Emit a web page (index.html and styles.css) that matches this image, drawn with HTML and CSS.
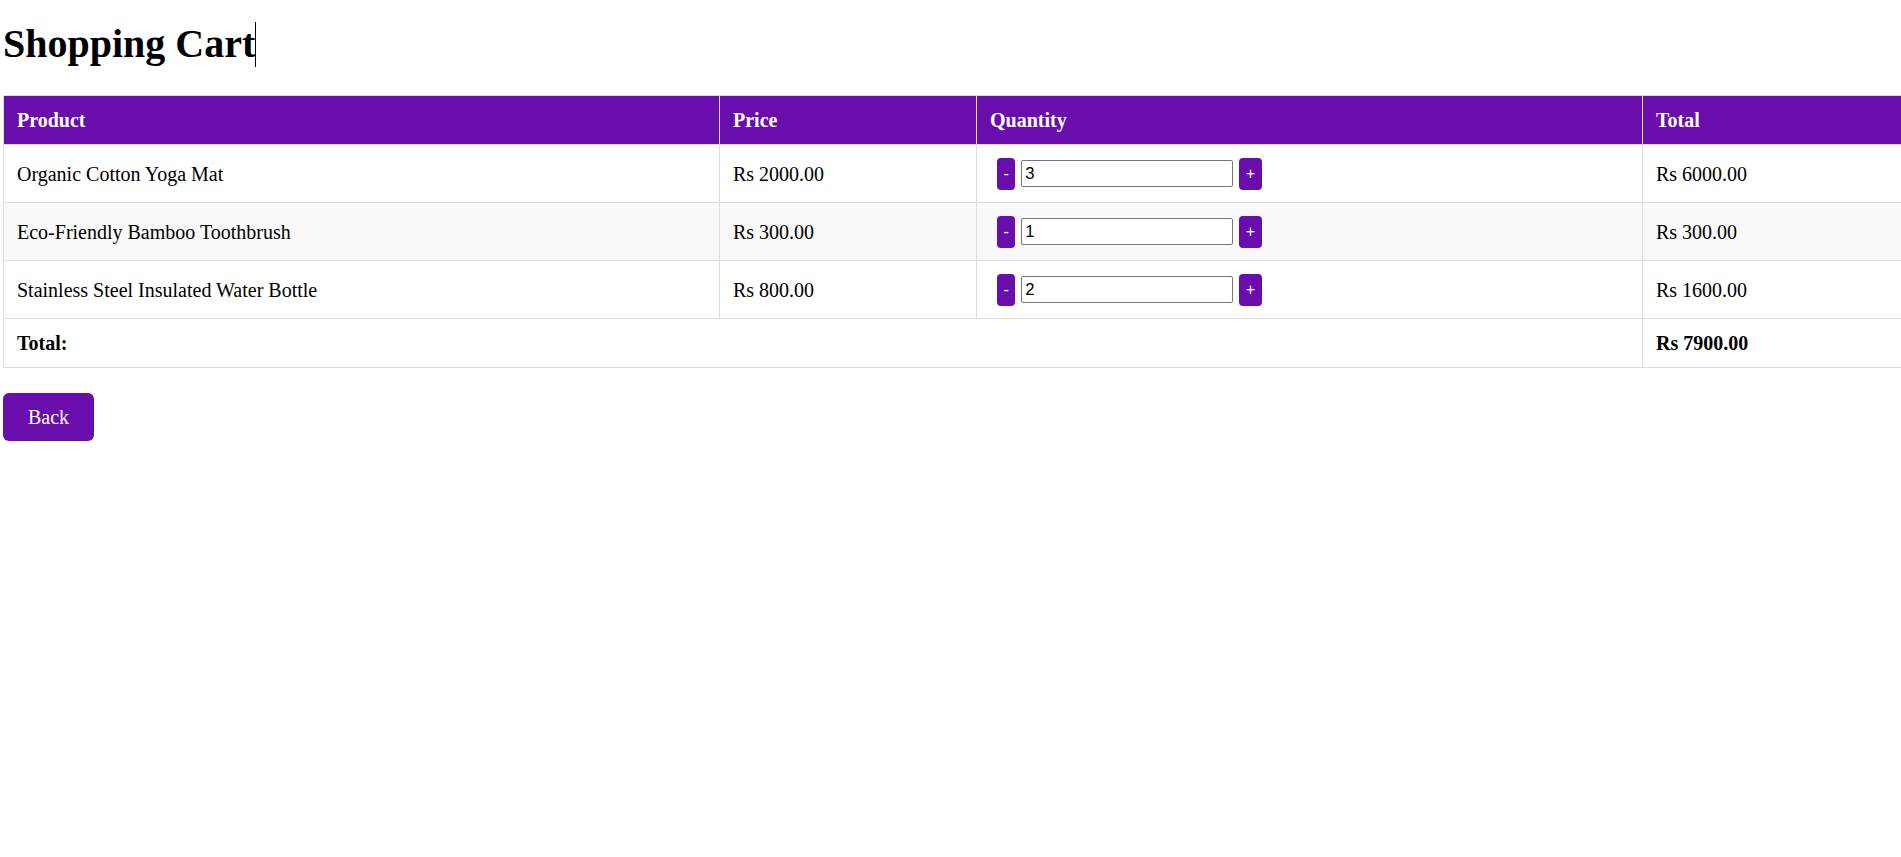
FILE: index.html
```html
<!DOCTYPE html>
<html lang="en">
<head>
<meta charset="utf-8">
<title>Shopping Cart</title>
<link rel="stylesheet" href="styles.css">
</head>
<body>
<h1 class="title">Shopping Cart<span class="caret"></span></h1>
<table class="cart">
  <colgroup>
    <col class="c-product">
    <col class="c-price">
    <col class="c-qty">
    <col class="c-total">
  </colgroup>
  <thead>
    <tr>
      <th>Product</th>
      <th>Price</th>
      <th>Quantity</th>
      <th>Total</th>
    </tr>
  </thead>
  <tbody>
    <tr>
      <td>Organic Cotton Yoga Mat</td>
      <td>Rs 2000.00</td>
      <td><div class="qty"><button class="qbtn">-</button><input class="qinput" type="text" value="3"><button class="qbtn">+</button></div></td>
      <td>Rs 6000.00</td>
    </tr>
    <tr class="alt">
      <td>Eco-Friendly Bamboo Toothbrush</td>
      <td>Rs 300.00</td>
      <td><div class="qty"><button class="qbtn">-</button><input class="qinput" type="text" value="1"><button class="qbtn">+</button></div></td>
      <td>Rs 300.00</td>
    </tr>
    <tr>
      <td>Stainless Steel Insulated Water Bottle</td>
      <td>Rs 800.00</td>
      <td><div class="qty"><button class="qbtn">-</button><input class="qinput" type="text" value="2"><button class="qbtn">+</button></div></td>
      <td>Rs 1600.00</td>
    </tr>
    <tr class="sum">
      <td colspan="3">Total:</td>
      <td>Rs 7900.00</td>
    </tr>
  </tbody>
</table>
<button class="back">Back</button>
</body>
</html>
```

FILE: styles.css
```css
html, body {
  margin: 0;
  padding: 0;
  background: #fff;
  overflow: hidden;
}
body {
  padding: 0 3px;
  font-family: "Liberation Serif", "Times New Roman", serif;
  color: #000;
}
.title {
  margin: 21px 0 28px;
  font-size: 40px;
  line-height: 46px;
  font-weight: bold;
  white-space: nowrap;
}
.caret {
  display: inline-block;
  width: 1px;
  height: 45px;
  background: #000;
  vertical-align: top;
  margin-top: 1px;
}
.cart {
  border-collapse: collapse;
  table-layout: fixed;
  width: 2040px;
  font-size: 20px;
  line-height: 24px;
}
.c-product { width: 716px; }
.c-price { width: 257px; }
.c-qty { width: 666px; }
.c-total { width: 401px; }
.cart th,
.cart td {
  border: 1px solid #ddd;
  padding: 12px 12px 12px 13px;
  text-align: left;
  vertical-align: middle;
}
.cart th {
  background: #6a0dad;
  color: #fff;
  font-weight: bold;
}
.cart tr.alt td {
  background: #f9f9f9;
}
.cart tr.sum td {
  font-weight: bold;
}
.qty {
  display: flex;
  align-items: center;
  height: 33px;
  padding-left: 1px;
}
.qbtn {
  margin: 0 6px;
  padding: 8px 6.5px;
  height: 32px;
  border: none;
  border-radius: 4px;
  background: #6a0dad;
  color: #fff;
  font-family: "Liberation Sans", Arial, sans-serif;
  font-size: 16px;
  line-height: 16px;
}
.qinput {
  box-sizing: border-box;
  width: 212px;
  height: 27px;
  margin: 0;
  padding: 1px 3px;
  border: 1px solid #767676;
  border-radius: 2px;
  font-family: "Liberation Sans", Arial, sans-serif;
  font-size: 16.67px;
  color: #000;
}
.back {
  margin-top: 25px;
  padding: 12px 25px;
  border: none;
  border-radius: 6px;
  background: #6a0dad;
  color: #fff;
  font-family: "Liberation Serif", "Times New Roman", serif;
  font-size: 20px;
  line-height: 24px;
}
```
